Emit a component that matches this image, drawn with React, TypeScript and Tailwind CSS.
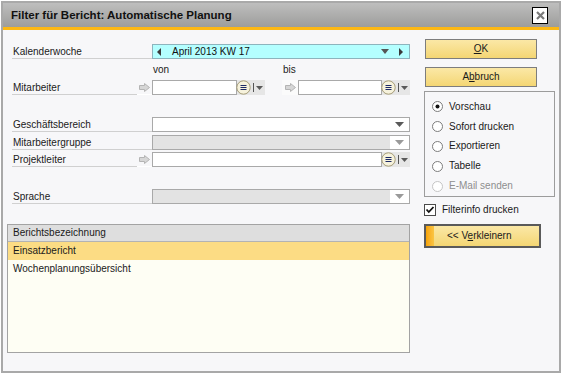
import React from "react";

function Down({ c = "#5e5e5e", w = 9, h = 5 }: { c?: string; w?: number; h?: number }) {
  return (
    <svg width={w} height={h} viewBox={`0 0 ${w} ${h}`}>
      <path d={`M0 0H${w}L${w / 2} ${h}Z`} fill={c} />
    </svg>
  );
}

function Arrow() {
  return (
    <svg width="11" height="9" viewBox="0 0 11 9">
      <path d="M0.5 2.5H5.5V0.5L10.5 4.5L5.5 8.5V6.5H0.5Z" fill="#d6d6d6" stroke="#b4b4b4" />
    </svg>
  );
}

function ListBtn() {
  return (
    <svg width="15" height="15" viewBox="0 0 15 15">
      <circle cx="7.5" cy="7.5" r="6.7" fill="#f6f2dc" stroke="#a59c78" strokeWidth="1" />
      <path d="M4.5 5.5h6M4.5 7.5h6M4.5 9.5h6" stroke="#1d2a66" strokeWidth="1.2" />
    </svg>
  );
}

function Lookup({ cls }: { cls: string }) {
  return (
    <div className={`flex h-full ${cls}`}>
      <div className="flex-1 bg-white border border-[#a9a9a9]" />
      <div className="w-[28px] bg-[#e6e6e6] flex items-center">
        <div className="-ml-px">
          <ListBtn />
        </div>
        <div className="ml-[2px] w-px h-[9px] bg-[#555]" />
        <div className="ml-[2px] flex items-center">
          <Down c="#5a5a5a" w={7} h={4} />
        </div>
      </div>
    </div>
  );
}

function Select({ disabled }: { disabled?: boolean }) {
  return (
    <div className={`h-full border border-[#a9a9a9] flex ${disabled ? "bg-[#e3e3e3]" : "bg-white"}`}>
      <div className="flex-1" />
      <div className="w-[19px] bg-white flex items-center justify-center">
        <Down c={disabled ? "#9a9a9a" : "#5a5a5a"} w={9} h={5} />
      </div>
    </div>
  );
}

function Row({ label, arrow, children }: { label: string; arrow?: boolean; children: React.ReactNode }) {
  return (
    <div className="flex h-[15px]">
      <div className="ml-[5px] w-[125px] border-b border-[#d0d0d0] flex items-end leading-[12px] pl-px">{label}</div>
      <div
        className={`w-[15px] border-b flex items-center justify-center ${arrow ? "border-white" : "border-[#d0d0d0]"}`}
      >
        {arrow && <Arrow />}
      </div>
      <div className="w-[258px]">{children}</div>
    </div>
  );
}

function Radio({ checked, disabled, label }: { checked?: boolean; disabled?: boolean; label: string }) {
  return (
    <div className="h-[20px] flex items-center pl-[7px] gap-[6px]">
      <svg width="11" height="11" viewBox="0 0 11 11">
        <circle cx="5.5" cy="5.5" r="5" fill="white" stroke={disabled ? "#c4c4c4" : "#7c7c7c"} />
        {checked && <circle cx="5.5" cy="5.5" r="2" fill="#111" />}
      </svg>
      <span className={disabled ? "text-[#8e8e8e]" : ""}>{label}</span>
    </div>
  );
}

export default function App() {
  return (
    <div className="w-[562px] h-[374px] bg-white pt-px px-px pb-px font-['Liberation_Sans',Arial,sans-serif] text-[10px] text-[#1a1a1a] leading-[12px]">
      <div className="h-full border-2 border-[#a9a9a9] bg-[#f7f7f9] flex flex-col">
        <div className="h-[24px] bg-gradient-to-b from-[#bebebe] to-[#9d9d9b] flex items-center justify-between pl-[8px] pr-[11px]">
          <span className="text-[11.5px] font-bold text-[#111]">Filter für Bericht: Automatische Planung</span>
          <div className="w-[16px] h-[17px] bg-white border border-black flex items-center justify-center">
            <svg width="9" height="9" viewBox="0 0 9 9">
              <path d="M1 1L8 8M8 1L1 8" stroke="#7a7a7a" strokeWidth="2.2" />
            </svg>
          </div>
        </div>
        <div className="h-[3px] bg-[#fcb814]" />
        <div className="flex flex-1">
          {/* left column */}
          <div className="ml-[4px] w-[403px] flex flex-col pt-[14px]">
            <Row label="Kalenderwoche">
              <div className="h-full bg-[#b4ffff] border border-[#8db4bd] flex items-center">
                <div className="ml-[4px]">
                  <svg width="4" height="8" viewBox="0 0 4 8">
                    <path d="M4 0V8L0 4Z" fill="#3a3a3a" />
                  </svg>
                </div>
                <span className="ml-[11px] text-[#111]">April 2013 KW 17</span>
                <div className="flex-1" />
                <Down c="#555" w={8} h={5} />
                <div className="ml-[10px] mr-[6px]">
                  <svg width="4" height="8" viewBox="0 0 4 8">
                    <path d="M0 0V8L4 4Z" fill="#3a3a3a" />
                  </svg>
                </div>
              </div>
            </Row>
            <div className="h-[21px] flex pt-[5px]">
              <span className="ml-[146px] w-[130px]">von</span>
              <span>bis</span>
            </div>
            <Row label="Mitarbeiter" arrow>
              <div className="flex h-full">
                <Lookup cls="w-[113px]" />
                <div className="w-[17px]" />
                <div className="w-[16px] flex items-center justify-center bg-[#fbfbfb]">
                  <Arrow />
                </div>
                <Lookup cls="w-[112px]" />
              </div>
            </Row>
            <div className="h-[22px]" />
            <Row label="Geschäftsbereich">
              <Select />
            </Row>
            <div className="h-[3px]" />
            <Row label="Mitarbeitergruppe">
              <Select disabled />
            </Row>
            <div className="h-[2px]" />
            <Row label="Projektleiter" arrow>
              <Lookup cls="w-[258px]" />
            </Row>
            <div className="h-[22px]" />
            <Row label="Sprache">
              <Select disabled />
            </Row>
            <div className="mt-[20px] h-[129px] border border-[#a3a3a3] bg-[#fefef4] flex flex-col">
              <div className="h-[17px] bg-[#dedede] border-b border-[#b3b3b3] flex items-center pl-[5px]">
                Berichtsbezeichnung
              </div>
              <div className="h-[18px] bg-[#fcdc84] flex items-center pl-[5px]">Einsatzbericht</div>
              <div className="h-[18px] flex items-center pl-[5px]">Wochenplanungsübersicht</div>
            </div>
          </div>
          {/* right column */}
          <div className="ml-[14px] w-[131px] flex flex-col pt-[9px]">
            <div className="ml-px w-[112px] h-[20px] border border-[#7d7d7d] bg-gradient-to-b from-[#fbe8a6] to-[#f4d673] flex items-center justify-center">
              <span>
                <span className="underline">O</span>K
              </span>
            </div>
            <div className="mt-[8px] ml-px w-[112px] h-[20px] border border-[#7d7d7d] bg-gradient-to-b from-[#fbe8a6] to-[#f4d673] flex items-center justify-center">
              <span>
                A<span className="underline">b</span>bruch
              </span>
            </div>
            <div className="mt-[4px] h-[106px] border border-[#9c9c9c] pt-[5px] flex flex-col">
              <Radio checked label="Vorschau" />
              <Radio label="Sofort drucken" />
              <Radio label="Exportieren" />
              <Radio label="Tabelle" />
              <Radio disabled label="E-Mail senden" />
            </div>
            <div className="mt-[7px] h-[12px] flex items-center gap-[6px]">
              <svg width="12" height="12" viewBox="0 0 12 12">
                <rect x="0.5" y="0.5" width="11" height="11" fill="white" stroke="#4a4a4a" />
                <path d="M2.5 5.5L4.8 8L9.5 3" stroke="#111" strokeWidth="1.8" fill="none" />
              </svg>
              <span>Filterinfo drucken</span>
            </div>
            <div className="mt-[8px] w-[117px] h-[24px] border-2 border-[#5a5a5a] flex">
              <div className="w-[8px] bg-gradient-to-r from-[#f6a300] to-[#fbc542]" />
              <div className="flex-1 bg-gradient-to-b from-[#fbe8a6] to-[#f4d673] flex items-center pl-[13px]">
                <span>
                  {"<< V"}
                  <span className="underline">e</span>rkleinern
                </span>
              </div>
            </div>
          </div>
        </div>
      </div>
    </div>
  );
}
